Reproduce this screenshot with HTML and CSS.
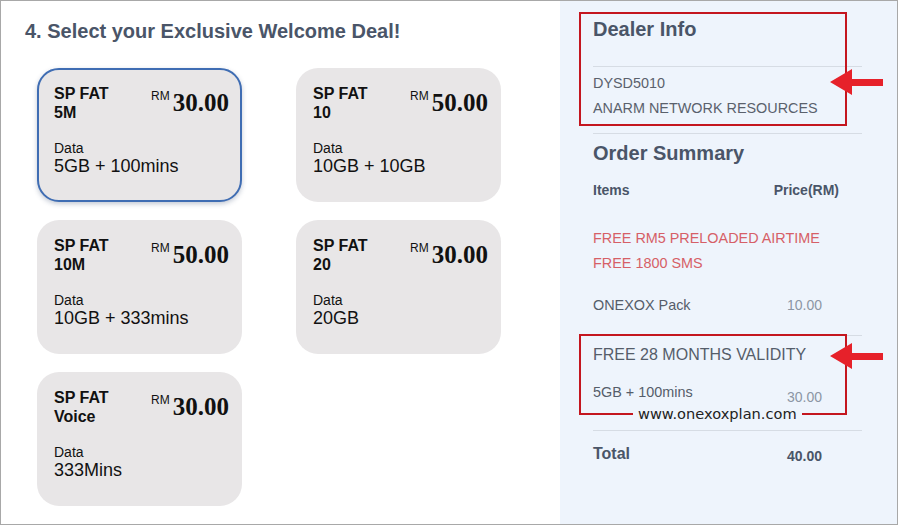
FILE: index.html
```html
<!DOCTYPE html>
<html>
<head>
<meta charset="utf-8">
<title>Select your Exclusive Welcome Deal</title>
<link rel="stylesheet" href="styles.css">
</head>
<body>
<div class="page">
  <section class="deals">
    <h3 class="deals-title">4. Select your Exclusive Welcome Deal!</h3>
    <div class="grid">
      <div class="card selected">
        <div class="card-head">
          <div class="card-name">SP FAT<br>5M</div>
          <div class="price"><span class="cur">RM</span><span class="amt">30.00</span></div>
        </div>
        <div class="data-label">Data</div>
        <div class="data-value">5GB + 100mins</div>
      </div>
      <div class="card">
        <div class="card-head">
          <div class="card-name">SP FAT<br>10</div>
          <div class="price"><span class="cur">RM</span><span class="amt">50.00</span></div>
        </div>
        <div class="data-label">Data</div>
        <div class="data-value">10GB + 10GB</div>
      </div>
      <div class="card">
        <div class="card-head">
          <div class="card-name">SP FAT<br>10M</div>
          <div class="price"><span class="cur">RM</span><span class="amt">50.00</span></div>
        </div>
        <div class="data-label">Data</div>
        <div class="data-value">10GB + 333mins</div>
      </div>
      <div class="card">
        <div class="card-head">
          <div class="card-name">SP FAT<br>20</div>
          <div class="price"><span class="cur">RM</span><span class="amt">30.00</span></div>
        </div>
        <div class="data-label">Data</div>
        <div class="data-value">20GB</div>
      </div>
      <div class="card">
        <div class="card-head">
          <div class="card-name">SP FAT<br>Voice</div>
          <div class="price"><span class="cur">RM</span><span class="amt">30.00</span></div>
        </div>
        <div class="data-label">Data</div>
        <div class="data-value">333Mins</div>
      </div>
    </div>
  </section>

  <aside class="panel">
    <h2 class="panel-title">Dealer Info</h2>
    <div class="rule rule-dealer"></div>
    <div class="dealer">
      <div>DYSD5010</div>
      <div>ANARM NETWORK RESOURCES</div>
    </div>
    <div class="rule rule-summary"></div>
    <h2 class="panel-title summary-title">Order Summary</h2>
    <div class="row head-row">
      <span>Items</span>
      <span class="head-price">Price(RM)</span>
    </div>
    <div class="freebies">
      <div>FREE RM5 PRELOADED AIRTIME</div>
      <div>FREE 1800 SMS</div>
    </div>
    <div class="row item-row">
      <span>ONEXOX Pack</span>
      <span class="item-price">10.00</span>
    </div>
    <div class="rule rule-plan"></div>
    <div class="plan-name">FREE 28 MONTHS VALIDITY</div>
    <div class="row plan-row">
      <span>5GB + 100mins</span>
      <span class="item-price plan-price">30.00</span>
    </div>
    <div class="rule rule-total"></div>
    <div class="row total-row">
      <span>Total</span>
      <span class="total-price">40.00</span>
    </div>

    <div class="mark mark-dealer"></div>
    <div class="mark mark-plan"></div>
    <div class="watermark">www.onexoxplan.com</div>
    <svg class="arrow arrow-dealer" width="54" height="26" viewBox="0 0 54 26"><polygon points="0,13 22,0 22,10 53,10 53,17 22,17 22,26" fill="#e6212a"/></svg>
    <svg class="arrow arrow-plan" width="54" height="26" viewBox="0 0 54 26"><polygon points="0,13 22,0 22,10 53,10 53,17 22,17 22,26" fill="#e6212a"/></svg>
  </aside>
</div>
</body>
</html>
```
FILE: styles.css
```css
* { box-sizing: border-box; }
html, body { margin: 0; padding: 0; background: #ffffff; }
body { font-family: "Liberation Sans", Arial, sans-serif; }

.page {
  width: 898px;
  height: 525px;
  border: 1px solid #a8a8a8;
  display: flex;
  background: #ffffff;
  overflow: hidden;
}

/* left side */
.deals {
  flex: 1;
  padding: 19px 0 0 24px;
}
.deals-title {
  margin: 0;
  font-size: 20px;
  line-height: 23px;
  font-weight: bold;
  color: #4a5568;
}
.grid {
  margin: 25px 0 0 12px;
  display: grid;
  grid-template-columns: 205px 205px;
  grid-auto-rows: 134px;
  column-gap: 54px;
  row-gap: 18px;
}
.card {
  border: 2px solid transparent;
  border-radius: 22px;
  background: #e8e6e7;
  padding: 14px 11px 0 15px;
  color: #111111;
}
.card.selected {
  border-color: #3f6db3;
  box-shadow: 0 2px 5px rgba(40, 60, 100, 0.28);
}
.card-head {
  display: flex;
  justify-content: space-between;
  align-items: flex-start;
}
.card-name {
  font-size: 16px;
  line-height: 19px;
  font-weight: bold;
}
.price {
  margin-top: 6px;
  display: flex;
  align-items: flex-start;
}
.cur {
  font-size: 12px;
  line-height: 12px;
}
.amt {
  margin-left: 3px;
  font-family: "Liberation Serif", "Times New Roman", serif;
  font-weight: bold;
  font-size: 25px;
  line-height: 25px;
}
.data-label {
  margin-top: 18px;
  font-size: 14px;
  line-height: 16px;
}
.data-value {
  font-size: 18px;
  line-height: 21px;
}

/* right panel */
.panel {
  position: relative;
  width: 337px;
  flex: none;
  background: #eef4fc;
  padding: 17px 35px 0 33px;
  color: #555d6a;
  font-size: 14.4px;
}
.panel-title {
  margin: 0;
  font-size: 20px;
  line-height: 23px;
  font-weight: bold;
  color: #4a5568;
}
.rule {
  height: 1px;
  background: #d6dce4;
}
.rule-dealer { margin-top: 25px; }
.dealer {
  padding-top: 4px;
  line-height: 25px;
  color: #5a616c;
}
.rule-summary { margin-top: 12px; }
.summary-title { margin-top: 8px; }
.row {
  display: flex;
  justify-content: space-between;
  align-items: flex-start;
}
.head-row {
  margin-top: 17px;
  font-size: 14px;
  font-weight: bold;
  line-height: 16px;
  color: #4a5568;
}
.head-price { margin-right: 23px; }
.freebies {
  margin-top: 28px;
  line-height: 25px;
  color: #d65f67;
}
.item-row {
  margin-top: 17px;
  line-height: 25px;
}
.item-price {
  margin-right: 40px;
  font-size: 14px;
  color: #8c96a4;
}
.rule-plan { margin-top: 17px; }
.plan-name {
  margin-top: 9px;
  font-size: 16px;
  line-height: 20px;
}
.plan-row {
  margin-top: 19px;
  line-height: 16px;
}
.plan-price { padding-top: 5px; }
.rule-total { margin-top: 25px; }
.total-row {
  margin-top: 13px;
  line-height: 20px;
  font-weight: bold;
  color: #4a5568;
}
.total-row span:first-child { font-size: 16px; }
.total-price {
  margin-right: 40px;
  padding-top: 2px;
  font-size: 14px;
}

/* annotations laid over the panel */
.mark {
  position: absolute;
  left: 19px;
  width: 268px;
  border: 2px solid #c4161f;
}
.mark-dealer { top: 11px; height: 114px; }
.mark-plan { top: 333px; height: 81px; }
.watermark {
  position: absolute;
  left: 73px;
  top: 404px;
  padding: 0 5px;
  background: #eef4fc;
  font-family: "DejaVu Sans", Verdana, sans-serif;
  font-size: 14.6px;
  line-height: 18px;
  color: #222222;
}
.arrow {
  position: absolute;
  left: 270px;
}
.arrow-dealer { top: 68px; }
.arrow-plan { top: 342px; }
```
